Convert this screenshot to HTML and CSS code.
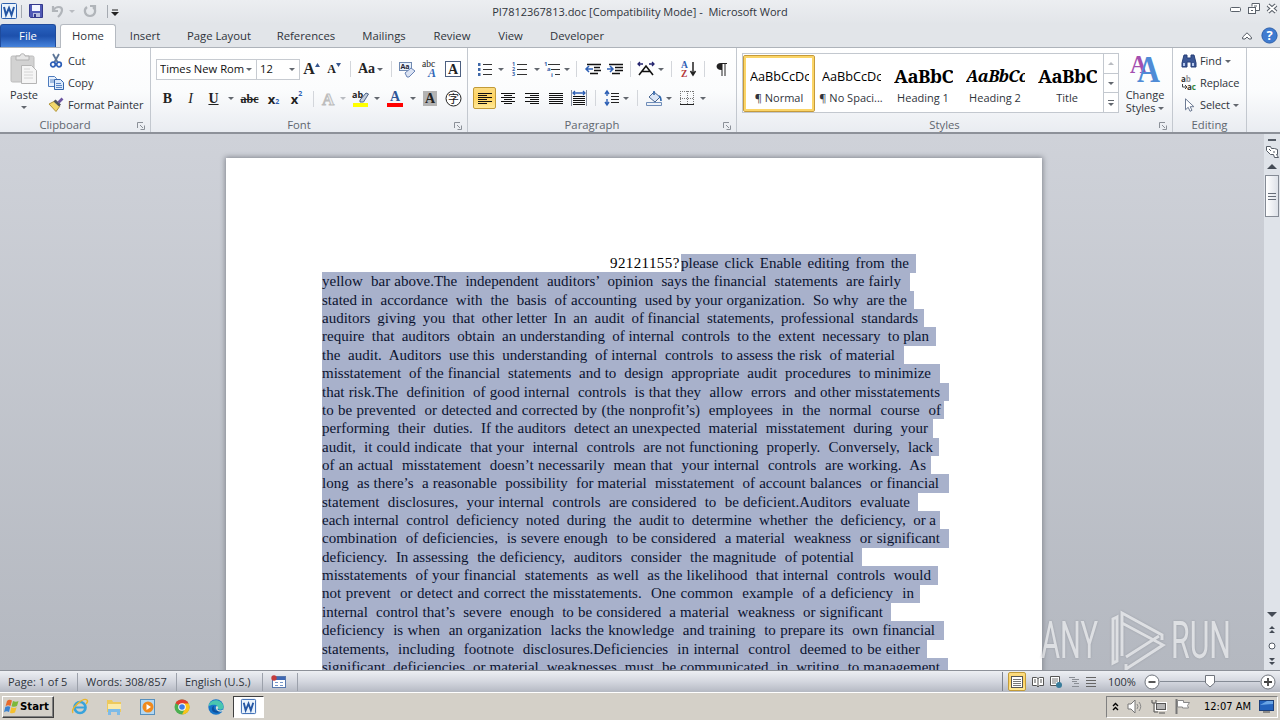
FILE: index.html
```html
<!DOCTYPE html>
<html lang="en">
<head>
    <meta charset="UTF-8">
    <meta name="viewport" content="width=device-width, initial-scale=1.0">
    <title>PI7812367813.doc [Compatibility Mode] - Microsoft Word</title>
    <link rel="stylesheet" href="styles.css">
</head>
<body>
    <header class="titlebar">
        <div class="quick-access">
            <svg width="18" height="18" viewBox="0 0 18 18"><rect x="1.5" y="1.5" width="15" height="15" rx="1" fill="#eaf3fc" stroke="#2b5fad"/><path d="M4 5l2 8 3-7 2.500 7 2.500-8" fill="none" stroke="#2456a4" stroke-width="2"/></svg>
            <i class="qa-sep"></i>
            <svg class="qa-save" width="14" height="14" viewBox="0 0 14 14"><path d="M.5.5h13v13h-12l-1-1z" fill="#5059b5" stroke="#34398c"/><path d="M3 1h8v6H3z" fill="#f4f6ff"/><path d="M4 9h7v4H4z" fill="#b9bfe0"/><path d="M5 10h2v3H5z" fill="#34398c"/></svg>
            <svg class="qa-undo" width="14" height="14" viewBox="0 0 14 14"><path d="M2 2v5h5M2.500 6C5 2 11 2 11 6c0 3-2 5-4 7" fill="none" stroke="#b1b5ba" stroke-width="2.200"/></svg>
            <i class="arrow pale"></i>
            <svg class="qa-redo" width="14" height="14" viewBox="0 0 14 14"><path d="M4 3C0 6 2 12 7 12s7-6 3-9M7 2h5v5" fill="none" stroke="#b1b5ba" stroke-width="2.200"/></svg>
            <i class="qa-sep"></i>
            <svg width="8" height="7" viewBox="0 0 8 7"><path d="M1 1h6" stroke="#222"/><path d="M0 3h8L4 7z" fill="#222"/></svg>
        </div>
        <h1>PI7812367813.doc [Compatibility Mode] -&nbsp; Microsoft Word</h1>
        <div class="window-buttons">
            <svg width="12" height="12" viewBox="0 0 12 12"><rect x=".5" y="4.500" width="10" height="4" rx="1" fill="#fff" stroke="#5b626b"/></svg>
            <svg width="12" height="12" viewBox="0 0 12 12"><path d="M4 3.500v-3h7.500v7H8" fill="#fff" stroke="#5b626b"/><rect x=".5" y="4.500" width="7" height="6" fill="#fff" stroke="#5b626b"/><path d="M3 7.500h2M6 3h3" stroke="#5b626b"/></svg>
            <svg width="12" height="12" viewBox="0 0 12 12"><path d="M2 2l8 7M10 2L2 9" stroke="#5b626b" stroke-width="4"/><path d="M2 2l8 7M10 2L2 9" stroke="#fff" stroke-width="1.800"/></svg>
        </div>
    </header>

    <nav class="tabs">
        <a class="tab file">File</a>
        <a class="tab active">Home</a>
        <a class="tab insert">Insert</a>
        <a class="tab layout">Page Layout</a>
        <a class="tab refs">References</a>
        <a class="tab mail">Mailings</a>
        <a class="tab review">Review</a>
        <a class="tab view">View</a>
        <a class="tab dev">Developer</a>
        <div class="tab-tools">
            <svg width="10" height="8" viewBox="0 0 10 8"><path d="M5 .8L9.300 5v2H7L5 5 3 7H.7V5z" fill="#fff" stroke="#555c66"/></svg>
            <svg width="17" height="17" viewBox="0 0 17 17"><circle cx="8.500" cy="8.500" r="7.600" fill="#3f7bd0" stroke="#2c5faa"/><text x="8.500" y="13" text-anchor="middle" font-size="13" font-weight="bold" fill="#fff">?</text></svg>
        </div>
    </nav>

    <section class="ribbon">
        <div class="group clipboard">
            <div class="group-body">
                <div class="paste">
                    <svg width="28" height="33" viewBox="0 0 28 33"><rect x="1" y="3" width="23" height="26" rx="1.500" fill="#d2d2d2" stroke="#bcbcbc"/><path d="M6 7V3h4c0-3 5-3 5 0h4v4z" fill="#e6e6e6" stroke="#b0b0b0"/><path d="M11.500 12.500h10l5 5v13h-15z" fill="#f5f5f5" stroke="#b5b5b5"/><path d="M14 16h6M14 19h9M14 22h9M14 25h9" stroke="#d4d4d4"/></svg>
                    <span>Paste</span>
                    <i class="arrow"></i>
                </div>
                <div class="stack">
                    <div><svg width="16" height="14" viewBox="0 0 16 14"><path d="M5 0l5 9M11 0L6 9" stroke="#5d7698" stroke-width="1.800"/><circle cx="5" cy="10.500" r="2.300" fill="none" stroke="#2d5fb8" stroke-width="1.700"/><circle cx="11" cy="10.500" r="2.300" fill="none" stroke="#2d5fb8" stroke-width="1.700"/></svg>Cut</div>
                    <div><svg width="16" height="14" viewBox="0 0 16 14"><path d="M.5.5h6l2 2v8h-8z" fill="#e8f1fd" stroke="#4d7bbd"/><path d="M6.500 3.500h6l3 3v7h-9z" fill="#dbe9fb" stroke="#3566ad"/><path d="M2 4h4M2 6h4M8 7.500h5M8 9.500h6M8 11.500h6" stroke="#5b86c5"/></svg>Copy</div>
                    <div><svg width="16" height="14" viewBox="0 0 16 14"><path d="M1 6l6-3 5 5-4 5.500z" fill="#f2d86c" stroke="#b3963a"/><path d="M6.500 2.500l5.500 5" stroke="#4f5560" stroke-width="3"/><path d="M10.500 4.500L14.500.5" stroke="#6c55a0" stroke-width="2.600"/></svg>Format Painter</div>
                </div>
            </div>
            <footer>Clipboard<svg class="launcher" width="8" height="8" viewBox="0 0 8 8"><path d="M.5 6V.5H6M3 3l3 3M7.500 3.500v4h-4" fill="none" stroke="#8b9098"/></svg></footer>
        </div>

        <div class="group font">
            <div class="group-body rows">
                <div class="row font-top">
                    <div class="combo"><span>Times New Roman</span><i class="arrow"></i></div>
                    <div class="combo"><span>12</span><i class="arrow"></i></div>
                    <b class="glyph grow">A<svg width="5" height="4"><path d="M0 4l2.500-4L5 4z" fill="#35568f"/></svg></b>
                    <b class="glyph shrink">A<svg width="5" height="4"><path d="M0 0h5L2.500 4z" fill="#35568f"/></svg></b>
                    <i class="sep"></i>
                    <b class="glyph case">Aa<i class="arrow"></i></b>
                    <i class="sep"></i>
                    <svg width="17" height="17" viewBox="0 0 17 17"><rect x=".5" y="1.500" width="12" height="8" fill="#e8f0fa" stroke="#7089b0"/><text x="1.500" y="8" font-size="7" font-weight="bold" fill="#223">Aa</text><path d="M6 12l6-5 4 3-6 6H8z" fill="#dbe3f3" stroke="#6983b5"/></svg>
                    <svg width="16" height="18" viewBox="0 0 16 18"><text x="0" y="7" class="serif" font-size="9.500" fill="#222">abc</text><text x="6" y="17" class="serif" font-size="12" font-style="italic" font-weight="bold" fill="#2f66b6">A</text></svg>
                    <svg width="16" height="17" viewBox="0 0 16 17"><rect x=".5" y=".5" width="15" height="15" fill="#fff" stroke="#4c5f80"/><text x="3" y="13" class="serif" font-size="14" font-weight="bold" fill="#222">A</text></svg>
                </div>
                <div class="row font-bottom">
                    <b class="glyph">B</b>
                    <em class="glyph">I</em>
                    <u class="glyph">U</u>
                    <i class="arrow"></i>
                    <s class="glyph">abc</s>
                    <b class="glyph script">x<sub>2</sub></b>
                    <b class="glyph script">x<sup>2</sup></b>
                    <i class="sep"></i>
                    <svg width="15" height="16" viewBox="0 0 15 16"><text x="1" y="14" class="serif" font-size="17" font-weight="bold" fill="#eee" stroke="#bdbdbd">A</text></svg>
                    <i class="arrow pale"></i>
                    <svg width="17" height="17" viewBox="0 0 17 17"><path d="M1 13h15v4H1z" fill="#ff0"/><text x="0" y="8" font-size="9" font-weight="bold" fill="#222">ab</text><path d="M8 10l6-7 2.500 1-5 8H8z" fill="#c4cedd" stroke="#4d6488"/></svg>
                    <i class="arrow"></i>
                    <svg width="16" height="17" viewBox="0 0 16 17"><path d="M0 13h16v4H0z" fill="#f00"/><text x="3" y="11" class="serif" font-size="14" font-weight="bold" fill="#2f5597">A</text></svg>
                    <i class="arrow"></i>
                    <svg width="14" height="15" viewBox="0 0 14 15"><path d="M0 0h14v15H0z" fill="#b3b3b3"/><text x="2" y="12" class="serif" font-size="14" font-weight="bold" fill="#222">A</text></svg>
                    <svg width="17" height="17" viewBox="0 0 17 17"><circle cx="8.500" cy="8.500" r="7.500" fill="#fff" stroke="#222"/><text x="3" y="12.500" class="cjk" font-size="11" fill="#111">字</text></svg>
                </div>
            </div>
            <footer>Font<svg class="launcher" width="8" height="8" viewBox="0 0 8 8"><path d="M.5 6V.5H6M3 3l3 3M7.500 3.500v4h-4" fill="none" stroke="#8b9098"/></svg></footer>
        </div>

        <div class="group paragraph">
            <div class="group-body rows">
                <div class="row para-top">
                    <svg width="14" height="13" viewBox="0 0 14 13"><path d="M5 1.500h9M5 6.500h9M5 11.500h9" stroke="#333"/><path d="M0 0h2.500v3H0zM0 5h2.500v3H0zM0 10h2.500v3H0z" fill="#3f68a8"/></svg>
                    <i class="arrow"></i>
                    <svg width="15" height="14" viewBox="0 0 15 14"><path d="M5 2.500h10M5 7.500h10M5 12.500h10" stroke="#333"/><g font-size="5.500" font-weight="bold" fill="#3460a8"><text x="0" y="4">1</text><text x="0" y="9">2</text><text x="0" y="14">3</text></g></svg>
                    <i class="arrow"></i>
                    <svg width="16" height="15" viewBox="0 0 16 15"><path d="M4 2.500h12M7 7.500h9M11 12.500h5" stroke="#333"/><g font-size="6" font-weight="bold" fill="#3460a8"><text x="0" y="4">1</text><text x="3" y="9">a</text><text x="7" y="15">i</text></g></svg>
                    <i class="arrow"></i>
                    <i class="sep"></i>
                    <svg width="16" height="13" viewBox="0 0 16 13"><path d="M2 1.500h14M9 4.500h6M9 7.500h7M5 10.500h8" stroke="#111" stroke-width="1.600"/><path d="M8 6H1m3-3L1 6l3 3" fill="none" stroke="#2e60b5" stroke-width="1.500"/></svg>
                    <svg width="16" height="13" viewBox="0 0 16 13"><path d="M2 1.500h14M8 4.500h8M8 7.500h8M5 10.500h8" stroke="#111" stroke-width="1.600"/><path d="M0 6h6M3 3l3 3-3 3" fill="none" stroke="#2e60b5" stroke-width="1.500"/></svg>
                    <i class="sep"></i>
                    <svg width="18" height="14" viewBox="0 0 18 14"><path d="M2 13L9 4l7 9M5 9.500h8" fill="none" stroke="#111" stroke-width="1.600"/><path d="M1 2h5M3 0L1 2l2 2M12 2h5M15 0l2 2-2 2" fill="none" stroke="#23236e" stroke-width="1.300"/></svg>
                    <i class="arrow"></i>
                    <i class="sep"></i>
                    <svg width="15" height="16" viewBox="0 0 15 16"><g class="serif" font-size="9.500" font-weight="bold"><text x="0" y="7" fill="#2e60b5">A</text><text x="0" y="15.500" fill="#b4383a">Z</text></g><path d="M12 1v12M9.500 10l2.500 4 2.500-4" fill="none" stroke="#222" stroke-width="1.500"/></svg>
                    <i class="sep"></i>
                    <svg width="11" height="13" viewBox="0 0 11 13"><path d="M5 0h6v1H9.500v12h-1V1h-2v12h-1V7C-1 7-1 0 5 0z" fill="#222"/></svg>
                </div>
                <div class="row para-bottom">
                    <span class="toggle"><svg width="14" height="11" viewBox="0 0 14 11"><path d="M0 .5h14M0 2.500h9M0 4.500h14M0 6.500h9M0 8.500h14M0 10.500h9" stroke="#111"/></svg></span>
                    <svg width="14" height="11" viewBox="0 0 14 11"><path d="M0 .5h14M3 2.500h8M0 4.500h14M3 6.500h8M0 8.500h14M3 10.500h8" stroke="#111"/></svg>
                    <svg width="14" height="11" viewBox="0 0 14 11"><path d="M0 .5h14M5 2.500h9M0 4.500h14M5 6.500h9M0 8.500h14M5 10.500h9" stroke="#111"/></svg>
                    <svg width="14" height="11" viewBox="0 0 14 11"><path d="M0 .5h14M0 2.500h14M0 4.500h14M0 6.500h14M0 8.500h14M0 10.500h14" stroke="#111"/></svg>
                    <svg width="16" height="16" viewBox="0 0 16 16"><path d="M.5 0v16M15.500 0v16" stroke="#8890a0"/><path d="M2 3h12M4 1L2 3l2 2M12 1l2 2-2 2" fill="none" stroke="#2e60b5" stroke-width="1.300"/><path d="M2 6.500h12M2 8.500h12M2 10.500h12M2 12.500h12M2 14.500h12" stroke="#111"/></svg>
                    <i class="sep"></i>
                    <svg width="15" height="16" viewBox="0 0 15 16"><path d="M3 1v5M1 4l2-3 2 3M3 9v6M1 12l2 3 2-3" fill="none" stroke="#2e60b5" stroke-width="1.400"/><path d="M7 3.500h8M7 6.500h8M7 9.500h8M7 12.500h8" stroke="#222"/></svg>
                    <i class="arrow"></i>
                    <i class="sep"></i>
                    <svg width="17" height="16" viewBox="0 0 17 16"><path d="M3 7l5-5 6 5-5 5z" fill="#dce7f7" stroke="#48658f"/><path d="M8 5V1M13 6c2 1 2 3 2 5" fill="none" stroke="#3268ad" stroke-width="1.600"/><path d="M.5 12.500h15v3H.5z" fill="#edf1f7" stroke="#6f8db9"/></svg>
                    <i class="arrow"></i>
                    <svg width="14" height="14" viewBox="0 0 14 14"><path d="M.5 0v13M13.500 0v13M0 .5h14M7.500 0v13M0 7.500h14" fill="none" stroke="#777" stroke-dasharray="1 1"/><path d="M0 13.500h14" stroke="#222"/></svg>
                    <i class="arrow"></i>
                </div>
            </div>
            <footer>Paragraph<svg class="launcher" width="8" height="8" viewBox="0 0 8 8"><path d="M.5 6V.5H6M3 3l3 3M7.500 3.500v4h-4" fill="none" stroke="#8b9098"/></svg></footer>
        </div>

        <div class="group styles">
            <div class="group-body">
                <div class="gallery">
                    <div class="style selected"><div class="sample">AaBbCcDc</div><span>¶ Normal</span></div>
                    <div class="style"><div class="sample">AaBbCcDc</div><span>¶ No Spaci...</span></div>
                    <div class="style"><div class="sample heading">AaBbC</div><span>Heading 1</span></div>
                    <div class="style"><div class="sample heading second">AaBbCc</div><span>Heading 2</span></div>
                    <div class="style"><div class="sample heading">AaBbC</div><span>Title</span></div>
                    <div class="gallery-nav">
                        <span><i class="arrow up pale"></i></span>
                        <span><i class="arrow"></i></span>
                        <span class="more"><i class="arrow"></i></span>
                    </div>
                </div>
                <div class="change">
                    <svg width="30" height="29" viewBox="0 0 30 29"><g class="serif" font-weight="bold"><text x="0" y="18" font-size="25" textLength="17" lengthAdjust="spacingAndGlyphs" fill="#a44fb0">A</text><text x="7" y="27" font-size="37" textLength="23" lengthAdjust="spacingAndGlyphs" fill="#4f8bd6">A</text></g></svg>
                    <span>Change</span>
                    <span>Styles <i class="arrow"></i></span>
                </div>
            </div>
            <footer>Styles<svg class="launcher" width="8" height="8" viewBox="0 0 8 8"><path d="M.5 6V.5H6M3 3l3 3M7.500 3.500v4h-4" fill="none" stroke="#8b9098"/></svg></footer>
        </div>

        <div class="group editing">
            <div class="group-body">
                <div class="stack">
                    <div><svg width="16" height="14" viewBox="0 0 16 14"><path d="M3 1h3v3h4V1h3l2 8v4h-5V8H6v5H1V9z" fill="#3b5795" stroke="#263f78"/><path d="M3 9v3M12 9v3" stroke="#b6c8ec" stroke-width="2"/></svg>Find<i class="arrow"></i></div>
                    <div><svg width="16" height="14" viewBox="0 0 16 14"><g font-size="8" font-weight="bold"><text x="0" y="6" fill="#333">a<tspan fill="#999">b</tspan></text><text x="6" y="14" fill="#333">a<tspan fill="#31853b">c</tspan></text></g><path d="M1.500 8v3h4M4 9l2 2-2 2" fill="none" stroke="#444"/></svg>Replace</div>
                    <div><svg width="16" height="14" viewBox="0 0 16 14"><path d="M4.500.8v11l2.700-2.500 1.800 4 2-1-1.800-3.600h3.700z" fill="#fff" stroke="#6d7b94"/></svg>Select<i class="arrow"></i></div>
                </div>
            </div>
            <footer>Editing</footer>
        </div>
    </section>

    <main class="workspace">
        <article class="page">
            <p class="line first" data-width="299"><span class="plain">92121155?</span><mark>please  click  Enable  editing  from  the</mark></p>
            <p class="line" data-width="579" data-tail="9"><mark>yellow  bar above.The  independent  auditors’  opinion  says the financial  statements  are fairly</mark></p>
            <p class="line" data-width="585" data-tail="7"><mark>stated in  accordance  with  the  basis  of accounting  used by your organization.  So why  are the</mark></p>
            <p class="line" data-width="596" data-tail="6"><mark>auditors  giving  you  that  other letter  In  an  audit  of financial  statements,  professional  standards</mark></p>
            <p class="line" data-width="607" data-tail="7"><mark>require  that  auditors  obtain  an understanding  of internal  controls  to the  extent  necessary  to plan</mark></p>
            <p class="line" data-width="573" data-tail="9"><mark>the  audit.  Auditors  use this  understanding  of internal  controls  to assess the risk  of material</mark></p>
            <p class="line" data-width="609" data-tail="9"><mark>misstatement  of the financial  statements  and to  design  appropriate  audit  procedures  to minimize</mark></p>
            <p class="line" data-width="618" data-tail="9"><mark>that risk.The  definition  of good internal  controls  is that they  allow  errors  and other misstatements</mark></p>
            <p class="line" data-width="619" data-tail="3"><mark>to be prevented  or detected and corrected by (the nonprofit’s)  employees  in  the  normal  course  of</mark></p>
            <p class="line" data-width="606" data-tail="5"><mark>performing  their  duties.  If the auditors  detect an unexpected  material  misstatement  during  your</mark></p>
            <p class="line" data-width="611" data-tail="6"><mark>audit,  it could indicate  that your  internal  controls  are not functioning  properly.  Conversely,  lack</mark></p>
            <p class="line" data-width="604" data-tail="5"><mark>of an actual  misstatement  doesn’t necessarily  mean that  your internal  controls  are working.  As</mark></p>
            <p class="line" data-width="617" data-tail="10"><mark>long  as there’s  a reasonable  possibility  for material  misstatement  of account balances  or financial</mark></p>
            <p class="line" data-width="588" data-tail="8"><mark>statement  disclosures,  your internal  controls  are considered  to  be deficient.Auditors  evaluate</mark></p>
            <p class="line" data-width="614" data-tail="4"><mark>each internal  control  deficiency  noted  during  the  audit to  determine  whether  the  deficiency,  or a</mark></p>
            <p class="line" data-width="618" data-tail="9"><mark>combination  of deficiencies,  is severe enough  to be considered  a material  weakness  or significant</mark></p>
            <p class="line" data-width="532" data-tail="8"><mark>deficiency.  In assessing  the deficiency,  auditors  consider  the magnitude  of potential</mark></p>
            <p class="line" data-width="609" data-tail="7"><mark>misstatements  of your financial  statements  as well  as the likelihood  that internal  controls  would</mark></p>
            <p class="line" data-width="592" data-tail="6"><mark>not prevent  or detect and correct the misstatements.  One common  example  of a deficiency  in</mark></p>
            <p class="line" data-width="561" data-tail="8"><mark>internal  control that’s  severe  enough  to be considered  a material  weakness  or significant</mark></p>
            <p class="line" data-width="613" data-tail="9"><mark>deficiency  is when  an organization  lacks the knowledge  and training  to prepare its  own financial</mark></p>
            <p class="line" data-width="598" data-tail="7"><mark>statements,  including  footnote  disclosures.Deficiencies  in internal  control  deemed to be either</mark></p>
            <p class="line" data-width="618" data-tail="8"><mark>significant  deficiencies  or material  weaknesses  must  be communicated  in  writing  to management</mark></p>
        </article>
        <aside class="scrollbar">
            <svg width="16" height="26" viewBox="0 0 16 26"><path d="M4 6h8" stroke="#555c66" stroke-width="2"/><path d="M2.500 12.500h4l1 2h3l3 1v5h-1l2 3h-4l-1-3h-3l-4-4z" fill="#fff" stroke="#555c66"/><path d="M5 15l2 2m3 0v2" stroke="#555c66"/></svg>
            <i class="big-arrow up"></i>
            <div class="thumb"><i></i><i></i><i></i></div>
            <i class="big-arrow down"></i>
            <div class="browse">
                <svg width="8" height="8" viewBox="0 0 8 8"><path d="M4 0l3 3H1zM4 4l3 3H1z" fill="#444b55"/></svg>
                <svg width="8" height="8" viewBox="0 0 8 8"><circle cx="4" cy="4" r="3" fill="#fff" stroke="#555c66"/></svg>
                <svg width="8" height="8" viewBox="0 0 8 8"><path d="M1 0h6L4 3zM1 4h6L4 7z" fill="#444b55"/></svg>
            </div>
        </aside>
        <svg class="watermark" width="196" height="64" viewBox="0 0 196 64">
            <g class="mark-text" font-size="51"><text x="1" y="49" textLength="57" lengthAdjust="spacingAndGlyphs">ANY</text><text x="131" y="49" textLength="60" lengthAdjust="spacingAndGlyphs">RUN</text></g>
            <path d="M77 8l-4 2v44l4-2zM82 47V4l40 22v5M82 14l41 22-37 24v-5M86 48l33-21" fill="none" stroke="#fff" stroke-width="3"/>
        </svg>
    </main>

    <footer class="statusbar">
        <span class="pages">Page: 1 of 5</span>
        <span class="words">Words: 308/857</span>
        <span class="language">English (U.S.)</span>
        <span class="macro"><svg width="15" height="13" viewBox="0 0 15 13"><rect x="1.500" y="1.500" width="13" height="11" fill="#fff" stroke="#5878ad"/><path d="M2 2h12v3H2z" fill="#3f68b4"/><path d="M4 7.500h3m2 0h3M4 10.500h3m2 0h3" stroke="#7696c8"/><circle cx="3" cy="3" r="2.700" fill="#c43c3c"/></svg></span>
        <div class="views">
            <span class="toggle"><svg width="12" height="12" viewBox="0 0 12 12"><rect x=".5" y=".5" width="11" height="11" fill="#fff" stroke="#555"/><path d="M2 3.500h8M2 5.500h8M2 7.500h8M2 9.500h8" stroke="#777"/></svg></span>
            <svg width="12" height="12" viewBox="0 0 12 12"><path d="M.5 1.500h4l1.500 1 1.500-1h4v8h-4l-1.500 1.500-1.500-1.500h-4zM6 2v9" fill="#fff" stroke="#555"/><path d="M2 4h2M2 6h2M8 4h2M8 6h2" stroke="#555"/></svg>
            <svg width="12" height="12" viewBox="0 0 12 12"><path d="M.5.5h9v9h-9z" fill="#fff" stroke="#555"/><path d="M2 3h6M2 5h6M2 7h4" stroke="#777"/><circle cx="9" cy="9" r="3" fill="#387c9b"/></svg>
            <svg width="12" height="12" viewBox="0 0 12 12"><path d="M1 1.500h6M4 3.500h7M4 5.500h5M6 7.500h5M4 10.500h7" stroke="#8a8e95"/></svg>
            <svg width="10" height="12" viewBox="0 0 10 12"><path d="M0 1.500h10M0 4.500h10M0 7.500h10M0 10.500h10" stroke="#666"/></svg>
        </div>
        <span class="zoom-label">100%</span>
        <div class="zoom">
            <svg width="16" height="16" viewBox="0 0 16 16"><circle cx="8" cy="8" r="7" fill="#fff" stroke="#70757d"/><path d="M4.500 8h7" stroke="#444" stroke-width="1.800"/></svg>
            <div class="track"><svg width="10" height="13" viewBox="0 0 10 13"><path d="M.5.500h9v7.500l-4.500 4-4.500-4z" fill="#fff" stroke="#70757d"/></svg></div>
            <svg width="16" height="16" viewBox="0 0 16 16"><circle cx="8" cy="8" r="7" fill="#fff" stroke="#70757d"/><path d="M4 8h8M8 4v8" stroke="#444" stroke-width="1.800"/></svg>
        </div>
    </footer>

    <footer class="taskbar">
        <button class="start"><svg width="15" height="15" viewBox="0 0 15 15"><path d="M3 2q2-2 5-.5L6.500 7q-3-1.500-5 .5z" fill="#e86a2b"/><path d="M9 2q3 1.500 5.500 0L13 7q-2.500 1.500-5.500.3z" fill="#7db83a"/><path d="M1.300 8q2.500-1.500 5-.3L5 13q-2.500-1.500-5 .3z" fill="#3b82cf"/><path d="M7.300 8.300q3 1.300 5.300 0L11 13.500q-3 1.300-5 .2z" fill="#f5c02e"/></svg>Start</button>
        <div class="launch">
            <svg width="18" height="18" viewBox="0 0 18 18"><circle cx="9" cy="9.500" r="5.500" fill="none" stroke="#38a3dc" stroke-width="2.700"/><path d="M4 9.500h10" stroke="#38a3dc" stroke-width="2"/><path d="M2 15C-1 11 12-1 16 2c1 1 0 3-1 4" fill="none" stroke="#e8b52c" stroke-width="1.400"/></svg>
            <svg width="18" height="18" viewBox="0 0 18 18"><path d="M2 2h5l1 2h8v10H2z" fill="#edc95c"/><path d="M3 6h13v5H3z" fill="#fbeaa8"/><path d="M3 17v-6h12v6h-3v-3H6v3z" fill="#7dbbe8"/></svg>
            <svg width="18" height="18" viewBox="0 0 18 18"><rect x="1.500" y="1.500" width="14" height="15" fill="#b3d7f2" stroke="#5790bd"/><circle cx="9" cy="9" r="5.500" fill="#f08a1d"/><path d="M7.500 6l4.500 3-4.500 3z" fill="#fff"/></svg>
            <svg width="18" height="18" viewBox="0 0 18 18"><circle cx="9" cy="9" r="7.500" fill="#4caf50"/><path d="M9 9L2.500 5.200A7.500 7.500 0 0 1 15.500 5.200z" fill="#e23d30"/><path d="M9 9V5.500h6.700A7.500 7.500 0 0 1 9 16.500l3-5.700z" fill="#fbc31b"/><circle cx="9" cy="9" r="3.800" fill="#fff"/><circle cx="9" cy="9" r="2.800" fill="#3c7ee8"/></svg>
            <svg width="18" height="18" viewBox="0 0 18 18"><circle cx="9" cy="9" r="7.700" fill="#1674c9"/><path d="M2 6c3-6 14-5 14.500 3 0 3-5 3.500-6 1.500C12 8 8 5 2 8z" fill="#49c6b0"/><path d="M7 8c-1 3 1 6 7 5-3 3-8 2-9-1-.5-2 .5-4 2-4z" fill="#0d4f9c"/><path d="M9 8.500c2-1 3 1 1.500 2.500 1 2 4 1.500 5.500.5V13c-4 2-8-1-7-4.500z" fill="#d6dfd8"/></svg>
        </div>
        <div class="task"><svg width="17" height="17" viewBox="0 0 18 18"><rect x="1.500" y="1.500" width="15" height="15" rx="1" fill="#eaf3fc" stroke="#2b5fad"/><path d="M4 5l2 8 3-7 2.500 7 2.500-8" fill="none" stroke="#2456a4" stroke-width="2"/></svg></div>
        <div class="tray">
            <svg width="7" height="9" viewBox="0 0 7 9"><path d="M1 4l2.500-2.500L6 4M1 8l2.500-2.500L6 8" fill="none" stroke="#000" stroke-width="1.400"/></svg>
            <svg width="16" height="15" viewBox="0 0 16 15"><path d="M1 5h3l4-4v13l-4-4H1z" fill="#fff" stroke="#777"/><path d="M10 5q2 2.500 0 5M12 3q3.500 4.500 0 9" fill="none" stroke="#888"/></svg>
            <svg width="16" height="15" viewBox="0 0 16 15"><rect x="4.500" y="3.500" width="11" height="8" fill="#aaa" stroke="#fff"/><rect x="5.500" y="4.500" width="9" height="6" fill="#b5b5b5" stroke="#555"/><path d="M8 14h6M1 1v3h4V1M3 4v9h4" fill="none" stroke="#555"/></svg>
            <svg width="16" height="15" viewBox="0 0 16 15"><path d="M1.500 0v15" stroke="#777" stroke-width="2"/><path d="M2.500 1.500h6v2h6l-2 3 1 2.500h-6V8h-5z" fill="#fff" stroke="#888"/></svg>
            <time>12:07 AM</time>
            <svg width="15" height="13" viewBox="0 0 15 13"><rect x=".5" y=".5" width="14" height="10" fill="#2463bd" stroke="#1c3f79"/><path d="M1 5L8 1h6v3z" fill="#6aa5e6"/><path d="M4 12h7" stroke="#444"/></svg>
        </div>
    </footer>

    <script>
        // Spread each line's slack over its spaces so the line ends where the layout says
        document.querySelectorAll('.line').forEach(line => {
            const mark = line.querySelector('mark');
            const spaces = mark.textContent.split(' ').length - 1;
            const used = [...line.children].reduce((sum, part) => sum + part.getBoundingClientRect().width, 0);
            mark.style.wordSpacing = ((Number(line.dataset.width) - used) / spaces) + 'px';
            mark.style.paddingRight = (line.dataset.tail || 7) + 'px';
        });
    </script>
</body>
</html>
```
FILE: styles.css
```css
* {
    box-sizing: border-box;
    margin: 0;
    padding: 0;
}

body {
    width: 1280px;
    height: 720px;
    overflow: hidden;
    display: flex;
    flex-direction: column;
    font-family: "Open Sans", "Noto Sans", sans-serif;
    font-size: 11px;
    line-height: 14px;
    color: #2f343b;
    background: #e3e6ea;
}

svg {
    display: block;
    flex: none;
    overflow: visible;
}

.serif {
    font-family: "Liberation Serif", serif;
}

.cjk {
    font-family: "Noto Sans CJK SC", sans-serif;
}

.arrow {
    flex: none;
    display: inline-block;
    border: 3px solid transparent;
    border-top-color: #62676e;
    border-bottom: 0;
}

.arrow.pale {
    border-top-color: #b9bcc1;
}

.arrow.up {
    border-top: 0;
    border-bottom: 3px solid #b9bcc1;
}

/* Title bar */
.titlebar {
    height: 24px;
    flex: none;
    display: grid;
    grid-template-columns: 200px 1fr 200px;
    align-items: center;
    background: linear-gradient(#eceef1, #e2e5e9);
}

.titlebar h1 {
    font-size: 11px;
    font-weight: normal;
    text-align: center;
}

.quick-access {
    display: flex;
    align-items: center;
    padding-bottom: 2px;
}

.qa-sep {
    width: 1px;
    height: 13px;
    margin: 0 4px 0 3px;
    background: #a5aab1;
}

.qa-save {
    margin: 0 8px 0 3px;
}

.qa-undo {
    margin-right: 4px;
}

.qa-redo {
    margin: 0 7px 0 8px;
}

.quick-access svg:last-child {
    margin-top: 2px;
}

.quick-access .qa-redo + .qa-sep {
    margin-right: 3px;
}

.window-buttons {
    display: flex;
    gap: 6px;
    justify-content: flex-end;
    padding: 0 2px 6px 0;
}

/* Ribbon tabs */
.tabs {
    height: 24px;
    flex: none;
    display: flex;
    background: #e2e5e9;
    border-bottom: 1px solid #aeb3ba;
}

.tab {
    line-height: 23px;
    text-align: center;
    font-size: 11.3px;
}

.tab.file {
    width: 56px;
    margin-right: 4px;
    color: #fff;
    line-height: 22px;
    border: 1px solid #1f4b9c;
    border-bottom: 0;
    border-radius: 3px 3px 0 0;
    background: linear-gradient(#2a63c0, #1d50ac 50%, #4683dc);
}

.tab.active {
    width: 56px;
    height: 24px;
    line-height: 22px;
    border: 1px solid #b5bac1;
    border-bottom: 0;
    border-radius: 3px 3px 0 0;
    background: #fff;
}

.tab.insert { width: 58px; }
.tab.layout { width: 90px; }
.tab.refs { width: 84px; }
.tab.mail { width: 72px; }
.tab.review { width: 64px; }
.tab.view { width: 53px; }
.tab.dev { width: 80px; }

.tab-tools {
    margin-left: auto;
    display: flex;
    align-items: center;
    gap: 9px;
    padding-right: 2px;
}

/* Ribbon */
.ribbon {
    height: 86px;
    flex: none;
    display: flex;
    background: linear-gradient(#fff, #fbfcfd 50%, #e9ecf1);
    border-bottom: 2px solid #8d9199;
}

.group {
    display: flex;
    flex-direction: column;
    border-right: 1px solid #c3c8cf;
}

.clipboard { width: 151px; }
.font { width: 317px; }
.paragraph { width: 269px; }
.styles { width: 436px; }
.editing { width: 74px; }

.group-body {
    height: 70px;
    display: flex;
}

.group > footer {
    height: 14px;
    display: flex;
    justify-content: center;
    position: relative;
    color: #60666f;
    padding-right: 20px;
    font-size: 11.3px;
}

.editing > footer {
    padding-right: 0;
}

.launcher {
    position: absolute;
    right: 5px;
    top: 4px;
}

.paste {
    width: 48px;
    display: flex;
    flex-direction: column;
    align-items: center;
    padding-top: 5px;
}

.paste span {
    margin: 2px 0 4px;
}

.stack {
    padding-top: 2px;
    white-space: nowrap;
}

.clipboard .stack {
    letter-spacing: -0.1px;
}

.stack div {
    height: 22px;
    display: flex;
    align-items: center;
    gap: 4px;
}

.editing .stack {
    padding-left: 8px;
}

.editing .stack div {
    gap: 3px;
    letter-spacing: -0.1px;
}

.rows {
    flex-direction: column;
    gap: 7px;
    padding: 10px 0 0 5px;
}

.row {
    display: grid;
    height: 22px;
    align-items: center;
    justify-items: center;
}

.font-top {
    grid-template-columns: 101px 43px 23px 22px 10px 31px 10px 22px 23px 24px;
}

.font-bottom {
    grid-template-columns: 23px 23px 23px 12px 25px 23px 23px 10px 20px 10px 24px 10px 26px 10px 24px 23px;
}

.para-top {
    grid-template-columns: 24px 8px 28px 8px 22px 8px 10px 23px 22px 8px 23px 8px 12px 22px 11px 22px;
}

.para-bottom {
    grid-template-columns: 23px 24px 24px 24px 22px 10px 22px 8px 15px 18px 12px 24px 7px;
}

.combo {
    width: 100%;
    height: 21px;
    display: flex;
    align-items: center;
    justify-content: space-between;
    padding: 0 4px 0 3px;
    border: 1px solid #c7cbd1;
    background: #fff;
    color: #111;
}

.combo + .combo {
    border-left: 0;
}

.combo span {
    max-width: 84px;
    overflow: hidden;
    white-space: nowrap;
    font-size: 11.2px;
}

.sep {
    width: 1px;
    height: 16px;
    background: #d3d6db;
}

.glyph {
    font-family: "Liberation Serif", serif;
    color: #222;
    font-size: 14px;
    display: flex;
    align-items: center;
}

s.glyph {
    font-size: 12px;
    font-weight: bold;
}

u.glyph {
    font-weight: bold;
}

.grow {
    font-size: 16px;
}

.shrink {
    font-size: 12px;
}

.grow svg,
.shrink svg {
    margin-bottom: 9px;
}

.case {
    font-size: 14px;
    gap: 2px;
}

.script {
    font-family: "Open Sans", sans-serif;
    font-size: 13px;
}

.script sub,
.script sup {
    font-size: 7px;
    color: #2e60b5;
    margin-top: 7px;
}

.script sup {
    margin: 0 0 9px;
}

.toggle {
    width: 23px;
    height: 22px;
    display: grid;
    place-items: center;
    border: 1px solid #c29b38;
    border-radius: 2px;
    background: linear-gradient(#fbdc83, #ffd35f 50%, #ffe998);
}

/* Styles gallery */
.gallery {
    width: 377px;
    height: 60px;
    margin: 5px 0 0 5px;
    display: flex;
    border: 1px solid #c3c8cf;
    background: #fff;
}

.style {
    width: 72px;
    height: 57px;
    margin-top: 1px;
    border: 2px solid transparent;
    border-radius: 2px;
    padding: 0 4px;
    text-align: center;
    white-space: nowrap;
}

.style.selected {
    border: 1px solid #c69b3a;
    padding: 1px 5px;
    box-shadow: inset 0 0 0 2px #fbd568;
}

.style > span {
    display: block;
    margin: -1px -4px 0;
}

.sample {
    height: 35px;
    line-height: 38px;
    margin-left: 1px;
    overflow: hidden;
    text-align: left;
    color: #000;
    font-size: 12.7px;
}

.sample.heading {
    font-family: "Noto Serif", "DejaVu Serif", "Liberation Serif", serif;
    font-size: 18.5px;
    font-weight: bold;
    letter-spacing: -0.5px;
}

.sample.second {
    font-size: 16.5px;
    font-style: italic;
    letter-spacing: -0.6px;
}

.gallery-nav {
    width: 15px;
    margin-left: auto;
    display: grid;
    grid-template-rows: 20px 19px 19px;
}

.gallery-nav span {
    display: grid;
    place-items: center;
    align-content: center;
    gap: 2px;
    border: solid #c3c8cf;
    border-width: 0 0 1px 1px;
}

.gallery-nav .more {
    border-bottom: 0;
}

.more::before {
    content: "";
    width: 6px;
    height: 1px;
    background: #62676e;
}

.change {
    width: 52px;
    display: flex;
    flex-direction: column;
    align-items: center;
    line-height: 13px;
    padding-top: 7px;
}

.change svg {
    margin-bottom: 4px;
}

.change .arrow {
    margin-bottom: 2px;
}

/* Document area */
.workspace {
    height: 537px;
    flex: none;
    position: relative;
    display: flex;
    justify-content: space-between;
    overflow: hidden;
    background: linear-gradient(#cfd2d9, #b4b8c0);
    border-bottom: 1px solid #8d9199;
}

.page {
    width: 816px;
    height: 700px;
    margin: 24px 0 0 226px;
    padding: 96px 0 0 96px;
    background: #fff;
    box-shadow: 0 0 5px 1px #858991;
    font-family: "Liberation Serif", serif;
    font-size: 15px;
    color: #000;
}

.line {
    display: flex;
    height: 18.37px;
    line-height: 19px;
    white-space: pre;
}

.line.first {
    padding-left: 288px;
}

.plain {
    width: 71px;
    letter-spacing: 0.4px;
}

.line mark {
    height: 18.5px;
    color: #0b1330;
    background: #a8b1cb;
}

.scrollbar {
    width: 16px;
    display: flex;
    flex-direction: column;
    align-items: center;
    background: #dfe3e9;
}

.big-arrow {
    border: 5px solid transparent;
}

.big-arrow.up {
    border-top: 0;
    border-bottom-color: #444b55;
    margin: 4px 0 6px;
}

.big-arrow.down {
    border-bottom: 0;
    border-top-color: #444b55;
    margin-top: auto;
}

.thumb {
    width: 14px;
    height: 42px;
    display: flex;
    flex-direction: column;
    justify-content: center;
    align-items: center;
    gap: 2px;
    border: 1px solid #858b95;
    background: linear-gradient(90deg, #fff, #dde1e8);
}

.thumb i {
    width: 8px;
    height: 1px;
    background: #666d78;
}

.browse {
    display: flex;
    flex-direction: column;
    gap: 8px;
    padding: 9px 0 4px;
}

.watermark {
    position: absolute;
    left: 1040px;
    top: 475px;
    opacity: 0.55;
    filter: drop-shadow(0 0 1px #858991);
}

.mark-text {
    font-family: Roboto, sans-serif;
    font-weight: 400;
    fill: #fff;
}

/* Status bar */
.statusbar {
    height: 21px;
    flex: none;
    display: flex;
    align-items: center;
    background: linear-gradient(#edeff3, #d4d7df 50%, #b5b9c3);
    font-size: 11px;
}

.statusbar > span {
    height: 18px;
    line-height: 18px;
    padding-left: 8px;
}

.pages,
.words,
.language,
.macro {
    border-right: 1px solid #9ca1ab;
}

.pages { width: 78px; }
.words { width: 99px; }
.language { width: 86px; }
.macro { width: 35px; padding-top: 2px; }

.views {
    display: flex;
    align-items: center;
    gap: 6px;
    margin-left: 704px;
    padding-left: 5px;
    border-left: 1px solid #7d828c;
}

.views .toggle {
    width: 18px;
    height: 19px;
}

.statusbar > .zoom-label {
    width: 48px;
    padding-left: 12px;
}

.zoom {
    display: flex;
    align-items: center;
}

.track {
    width: 100px;
    height: 13px;
    display: flex;
    justify-content: center;
    background: linear-gradient(#858b95, #858b95) center / 100% 1px no-repeat;
}

/* Taskbar */
.taskbar {
    height: 28px;
    flex: none;
    display: flex;
    align-items: center;
    border-top: 1px solid #fff;
    background: #d4d0c8;
    font-family: "DejaVu Sans Condensed", "Liberation Sans", sans-serif;
    color: #000;
}

.start {
    width: 52px;
    height: 22px;
    margin-left: 2px;
    display: flex;
    align-items: center;
    gap: 1px;
    border: 1px solid;
    border-color: #fff #404040 #404040 #fff;
    box-shadow: inset -1px -1px #808080;
    background: #d4d0c8;
    padding-left: 1px;
    font: bold 11.3px "DejaVu Sans Condensed", sans-serif;
}

.launch {
    display: flex;
    gap: 16px;
    margin-left: 17px;
}

.task {
    width: 31px;
    height: 22px;
    margin-left: 8px;
    display: grid;
    place-items: center;
    border: 1px solid;
    border-color: #404040 #fff #fff #404040;
    background: #fff;
}

.tray {
    width: 172px;
    height: 22px;
    margin: 0 2px 0 auto;
    display: flex;
    align-items: center;
    gap: 8px;
    padding-left: 5px;
    border: 1px solid;
    border-color: #808080 #fff #fff #808080;
}

.tray time {
    white-space: nowrap;
    margin-left: 5px;
}
```
